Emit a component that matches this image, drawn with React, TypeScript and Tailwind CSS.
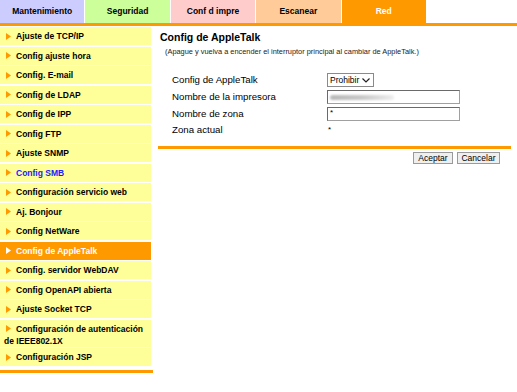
import React from 'react';

const TABS = [
  { label: 'Mantenimiento', cls: 'bg-[#ccccff] text-black' },
  { label: 'Seguridad', cls: 'bg-[#ccff99] text-black' },
  { label: 'Conf d impre', cls: 'bg-[#ffcccc] text-black' },
  { label: 'Escanear', cls: 'bg-[#ffcc99] text-black' },
  { label: 'Red', cls: 'bg-[#ff9900] text-white' },
];

type MenuItem = { label: string; active?: boolean; link?: boolean; tall?: boolean };

const MENU: MenuItem[] = [
  { label: 'Ajuste de TCP/IP' },
  { label: 'Config ajuste hora' },
  { label: 'Config. E-mail' },
  { label: 'Config de LDAP' },
  { label: 'Config de IPP' },
  { label: 'Config FTP' },
  { label: 'Ajuste SNMP' },
  { label: 'Config SMB', link: true },
  { label: 'Configuración servicio web' },
  { label: 'Aj. Bonjour' },
  { label: 'Config NetWare' },
  { label: 'Config de AppleTalk', active: true },
  { label: 'Config. servidor WebDAV' },
  { label: 'Config OpenAPI abierta' },
  { label: 'Ajuste Socket TCP' },
  { label: 'Configuración de autenticación de IEEE802.1X', tall: true },
  { label: 'Configuración JSP' },
];

function Arrow({ white }: { white?: boolean }) {
  return (
    <svg
      width="5"
      height="7"
      viewBox="0 0 5 7"
      className="inline-block ml-[2px] mr-[5px] align-[-0.5px]"
    >
      <polygon points="0,0 5,3.5 0,7" fill={ white ? '#ffffff' : '#ff9900' } />
    </svg>
  );
}

function SideMenu() {
  return (
    <div className="w-[153px] flex flex-col">
      <div className="w-[151px] flex flex-col gap-[1.5px]">
        {MENU.map((item) => (
          <div
            key={ item.label }
            className={ `${item.tall ? 'h-[27px] pt-[3px] leading-[12px]' : 'h-[18px] leading-[18px]'}
            pl-[4px] text-[8.5px] font-bold ${item.active ? 'bg-[#ff9900] text-white'
              : 'bg-[#ffff99]'} ${item.link ? 'text-[#2020ff]' : ''} ${!item.active && !item.link ? 'text-black' : ''}` }
          >
            <Arrow white={ item.active } />
            {item.label}
          </div>
        ))}
      </div>
      <div className="h-[3px] bg-[#ff9900] mt-[4px]" />
    </div>
  );
}

function Field({ children }: { children: React.ReactNode }) {
  return (
    <div
      className="h-[14px] w-[133px] bg-white border border-[#a0a0a0] border-t-[#6a6a6a]
      border-l-[#6a6a6a] flex items-center px-[2px]"
    >
      {children}
    </div>
  );
}

function AppleTalkForm() {
  return (
    <div className="flex-1 ml-[5px] mr-[6px] flex flex-col">
      <h1 className="pl-[2px] pt-[3px] text-[10.5px] font-bold leading-[14px] text-black">
        Config de AppleTalk
      </h1>
      <p className="pl-[7px] mt-[3px] text-[7.4px] leading-[10px] text-[#222]">
        (Apague y vuelva a encender el interruptor principal al cambiar de AppleTalk.)
      </p>

      <div className="mt-[16px] pl-[14px] grid grid-cols-[155px_1fr] gap-y-[3px] text-[9.7px] text-black">
        <div className="h-[14px] leading-[14px]">Config de AppleTalk</div>
        <div className="h-[14px]">
          <div
            className="w-[47px] h-[14px] border border-[#8a8a8a] bg-white flex items-center
            pl-[2px] text-[8.5px] leading-none gap-[3px]"
          >
            Prohibir
            <svg width="8" height="5" viewBox="0 0 8 5">
              <polyline points="0.5,0.5 4,4 7.5,0.5" fill="none" stroke="#222" strokeWidth="1.2" />
            </svg>
          </div>
        </div>

        <div className="h-[14px] leading-[14px]">Nombre de la impresora</div>
        <Field>
          <div
            className="h-[5px] w-[64px] rounded-full blur-[1px]
            bg-gradient-to-r from-[#b8b8b8] via-[#c8c8c8] to-[#eeeeee]"
          />
        </Field>

        <div className="h-[14px] leading-[14px]">Nombre de zona</div>
        <Field>
          <span className="text-[8px] leading-none -mt-[2px]">*</span>
        </Field>

        <div className="h-[12px] leading-[12px]">Zona actual</div>
        <div className="h-[12px] leading-[12px] pl-[1px] text-[8px]">*</div>
      </div>

      <div className="h-[3px] bg-[#ff9900] mt-[10px]" />

      <div className="flex justify-end gap-[4px] mt-[3px] pr-[11px]">
        <button
          className="h-[12px] w-[40px] border border-[#9a9a9a] bg-[#efefef] text-[8.5px]
          leading-none text-black"
        >
          Aceptar
        </button>
        <button
          className="h-[12px] w-[43px] border border-[#9a9a9a] bg-[#efefef] text-[8.5px]
          leading-none text-black"
        >
          Cancelar
        </button>
      </div>
    </div>
  );
}

export default function App() {
  return (
    <div
      className="w-[517px] h-[392px] bg-white overflow-hidden"
      style={ { fontFamily: '"Liberation Sans", Arial, sans-serif' } }
    >
      <div className="flex h-[23px] gap-px">
        {TABS.map((tab) => (
          <div
            key={ tab.label }
            className={ `w-[84.4px] flex items-center justify-center text-[8.5px] font-bold ${tab.cls}` }
          >
            {tab.label}
          </div>
        ))}
      </div>
      <div className="h-[3px] bg-[#ff9900]" />

      <div className="flex mt-px">
        <SideMenu />
        <AppleTalkForm />
      </div>
    </div>
  );
}
